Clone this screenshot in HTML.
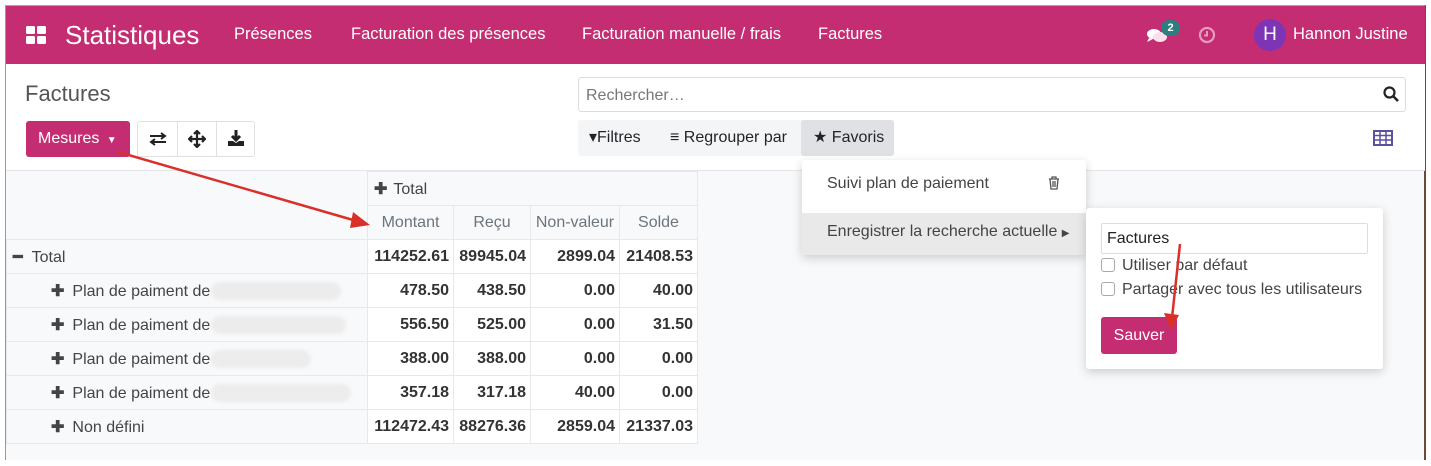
<!DOCTYPE html>
<html><head><meta charset="utf-8"><style>
*{box-sizing:border-box}
body{margin:0;width:1431px;height:466px;background:#fff;font-family:"Liberation Sans",sans-serif;position:relative;overflow:hidden;color:#212529}
.frame{position:absolute;left:5px;top:5px;width:1421px;height:455px;border-left:1px solid #999;border-top:1px solid #aaa;border-right:2px solid #6b4a3a;background:#f8f9fa}
.nav{position:absolute;left:6px;top:6px;width:1419px;height:58px;background:#c42d72;color:#fff}
.nav .t{position:absolute;font-size:16.5px;top:19px}
.top{position:absolute;left:6px;top:64px;width:1419px;height:107px;background:#fff;border-bottom:1px solid #e3e5e8}
.abs{position:absolute}
table{position:absolute;left:6px;top:171px;border-collapse:collapse;font-size:16px}
td{border:1px solid #e6e8eb;height:34px;padding:0 4px;white-space:nowrap}
td.n{text-align:right;background:#fff;font-weight:bold;color:#333}
td.h{color:#6c757d;text-align:center;background:#f8f9fa}
td.l{padding-left:44px;color:#444}
td.l b{margin-right:8px}
.blur{display:inline-block;width:130px;height:18px;border-radius:9px;background:#ececec;vertical-align:middle;filter:blur(1.5px);margin-left:-4px}
.drop{position:absolute;background:#fff;box-shadow:0 3px 10px rgba(0,0,0,.18);border-radius:3px}
.cb{display:inline-block;width:14px;height:14px;border:1px solid #aaa;border-radius:3px;vertical-align:-2px;margin-right:7px}
</style></head><body>
<div class="frame"></div>
<div class="nav">
 <svg class="abs" style="left:20px;top:20px" width="20" height="18"><rect x="0" y="0" width="9" height="8" rx="1.5" fill="#fff"/><rect x="11" y="0" width="9" height="8" rx="1.5" fill="#fff"/><rect x="0" y="10" width="9" height="8" rx="1.5" fill="#fff"/><rect x="11" y="10" width="9" height="8" rx="1.5" fill="#fff"/></svg>
 <div class="t" style="left:59px;top:14px;font-size:26px">Statistiques</div>
 <div class="t" style="left:228px">Présences</div>
 <div class="t" style="left:345px">Facturation des présences</div>
 <div class="t" style="left:576px">Facturation manuelle / frais</div>
 <div class="t" style="left:812px">Factures</div>
 <svg class="abs" style="left:1140px;top:21px" width="22" height="18"><ellipse cx="8" cy="7" rx="7" ry="5" fill="#fff"/><ellipse cx="14" cy="10" rx="7" ry="5" fill="#fbe0ec"/><path d="M3 11 L1 15 L7 12Z" fill="#fff"/></svg>
 <div class="abs" style="left:1155px;top:14px;width:19px;height:16px;border-radius:8px;background:#2c7f7f;font-size:11px;font-weight:bold;text-align:center;line-height:16px">2</div>
 <svg class="abs" style="left:1192px;top:20px" width="18" height="18"><circle cx="9" cy="9" r="7" fill="none" stroke="#e79bbf" stroke-width="2.2"/><path d="M9 5V9.5H6" fill="none" stroke="#e79bbf" stroke-width="2"/></svg>
 <div class="abs" style="left:1248px;top:13px;width:32px;height:32px;border-radius:50%;background:#7d35b5;text-align:center;line-height:32px;font-size:19px">H</div>
 <div class="t" style="left:1287px">Hannon Justine</div>
</div>
<div class="top">
 <div class="abs" style="left:19px;top:17px;font-size:22px;color:#555">Factures</div>
 <div class="abs" style="left:20px;top:57px;width:104px;height:36px;background:#c42d72;border-radius:3px;color:#fff;font-size:16px;line-height:36px;padding-left:12px">Mesures <span style="font-size:10px;margin-left:3px">▼</span></div>
 <div class="abs" style="left:131px;top:57px;width:118px;height:36px;border:1px solid #e0e0e0;border-radius:3px">
  <div class="abs" style="left:39px;top:0;width:1px;height:34px;background:#e0e0e0"></div>
  <div class="abs" style="left:78px;top:0;width:1px;height:34px;background:#e0e0e0"></div>
  <svg class="abs" style="left:11px;top:10px" width="18" height="14"><path d="M1 4H16M12 1L16 4L12 7M17 10H2M6 7L2 10L6 13" fill="none" stroke="#222" stroke-width="2"/></svg>
  <svg class="abs" style="left:50px;top:8px" width="18" height="18"><path d="M9 1V17M1 9H17M6 4L9 1L12 4M6 14L9 17L12 14M4 6L1 9L4 12M14 6L17 9L14 12" fill="none" stroke="#222" stroke-width="2.2"/></svg>
  <svg class="abs" style="left:89px;top:7px" width="18" height="18"><path d="M9 1V10M5 7L9 11L13 7" fill="none" stroke="#222" stroke-width="3"/><path d="M1 12H6L9 14L12 12H17V17H1Z" fill="#222"/></svg>
 </div>
 <div class="abs" style="left:572px;top:13px;width:828px;height:35px;border:1px solid #dcdcdc;border-radius:3px;font-size:16px;color:#777;line-height:35px;padding-left:7px">Rechercher…</div>
 <svg class="abs" style="left:1377px;top:22px" width="16" height="16"><circle cx="6.5" cy="6.5" r="5" fill="none" stroke="#222" stroke-width="2.2"/><path d="M10 10L15 15" stroke="#222" stroke-width="2.5"/></svg>
 <div class="abs" style="left:572px;top:56px;width:316px;height:36px;background:#f4f5f6;border-radius:3px;font-size:16px;line-height:36px">
  <span class="abs" style="left:11px">▾Filtres</span>
  <span class="abs" style="left:92px">≡ Regrouper par</span>
  <div class="abs" style="left:223px;top:0;width:93px;height:36px;background:#dfe1e4;border-radius:3px;padding-left:12px">★ Favoris</div>
 </div>
 <svg class="abs" style="left:1367px;top:66px" width="20" height="16"><rect x="1" y="1" width="18" height="14" fill="none" stroke="#5c4f9e" stroke-width="2"/><path d="M1 5.5H19M1 10H19M7 1V15M13 1V15" stroke="#5c4f9e" stroke-width="1.5"/></svg>
</div>
<table>
<tr><td style="width:361px;border:none;background:#f8f9fa" rowspan="2"></td><td colspan="4" style="background:#f8f9fa;padding-left:6px;color:#444"><b style="margin-right:6px">✚</b>Total</td></tr>
<tr><td class="h" style="width:86px">Montant</td><td class="h" style="width:77px">Reçu</td><td class="h" style="width:89px">Non-valeur</td><td class="h" style="width:78px">Solde</td></tr>
<tr><td style="padding-left:6px;color:#444"><b style="margin-right:9px">━</b>Total</td><td class="n">114252.61</td><td class="n">89945.04</td><td class="n">2899.04</td><td class="n">21408.53</td></tr>
<tr><td class="l"><b>✚</b>Plan de paiment de <span class="blur"></span></td><td class="n">478.50</td><td class="n">438.50</td><td class="n">0.00</td><td class="n">40.00</td></tr>
<tr><td class="l"><b>✚</b>Plan de paiment de <span class="blur" style="width:135px"></span></td><td class="n">556.50</td><td class="n">525.00</td><td class="n">0.00</td><td class="n">31.50</td></tr>
<tr><td class="l"><b>✚</b>Plan de paiment de <span class="blur" style="width:100px"></span></td><td class="n">388.00</td><td class="n">388.00</td><td class="n">0.00</td><td class="n">0.00</td></tr>
<tr><td class="l"><b>✚</b>Plan de paiment de <span class="blur" style="width:140px"></span></td><td class="n">357.18</td><td class="n">317.18</td><td class="n">40.00</td><td class="n">0.00</td></tr>
<tr><td class="l"><b>✚</b>Non défini</td><td class="n">112472.43</td><td class="n">88276.36</td><td class="n">2859.04</td><td class="n">21337.03</td></tr>
</table>
<div class="drop" style="left:802px;top:160px;width:284px;height:95px;font-size:16px;color:#444">
 <div class="abs" style="left:25px;top:15px">Suivi plan de paiement</div>
 <svg class="abs" style="left:246px;top:16px" width="12" height="14"><path d="M1 3H11M4 3V1H8V3M2 3L3 13H9L10 3M5 5V11M7 5V11" fill="none" stroke="#555" stroke-width="1.3"/></svg>
 <div class="abs" style="left:0;top:53px;width:284px;height:42px;background:#e9e9ea;padding:10px 0 0 25px">Enregistrer la recherche actuelle <span style="font-size:10px">▶</span></div>
</div>
<div class="drop" style="left:1086px;top:208px;width:297px;height:161px;font-size:16px;color:#444">
 <div class="abs" style="left:15px;top:15px;width:267px;height:31px;border:1px solid #ddd;border-radius:2px;color:#222;line-height:29px;padding-left:5px">Factures</div>
 <div class="abs" style="left:15px;top:49px"><span class="cb"></span>Utiliser par défaut</div>
 <div class="abs" style="left:15px;top:73px"><span class="cb"></span>Partager avec tous les utilisateurs</div>
 <div class="abs" style="left:15px;top:109px;width:76px;height:37px;background:#c42d72;border-radius:3px;color:#fff;text-align:center;line-height:37px">Sauver</div>
</div>
<svg class="abs" style="left:0;top:0" width="1431" height="466">
 <path d="M118 152L360 222" stroke="#d9302a" stroke-width="2.5"/><path d="M370 225L353 212L350 228Z" fill="#d9302a"/>
 <path d="M1180 244L1172 318" stroke="#d9302a" stroke-width="2.5"/><path d="M1171 330L1164 313L1179 315Z" fill="#d9302a"/>
</svg>
</body></html>
